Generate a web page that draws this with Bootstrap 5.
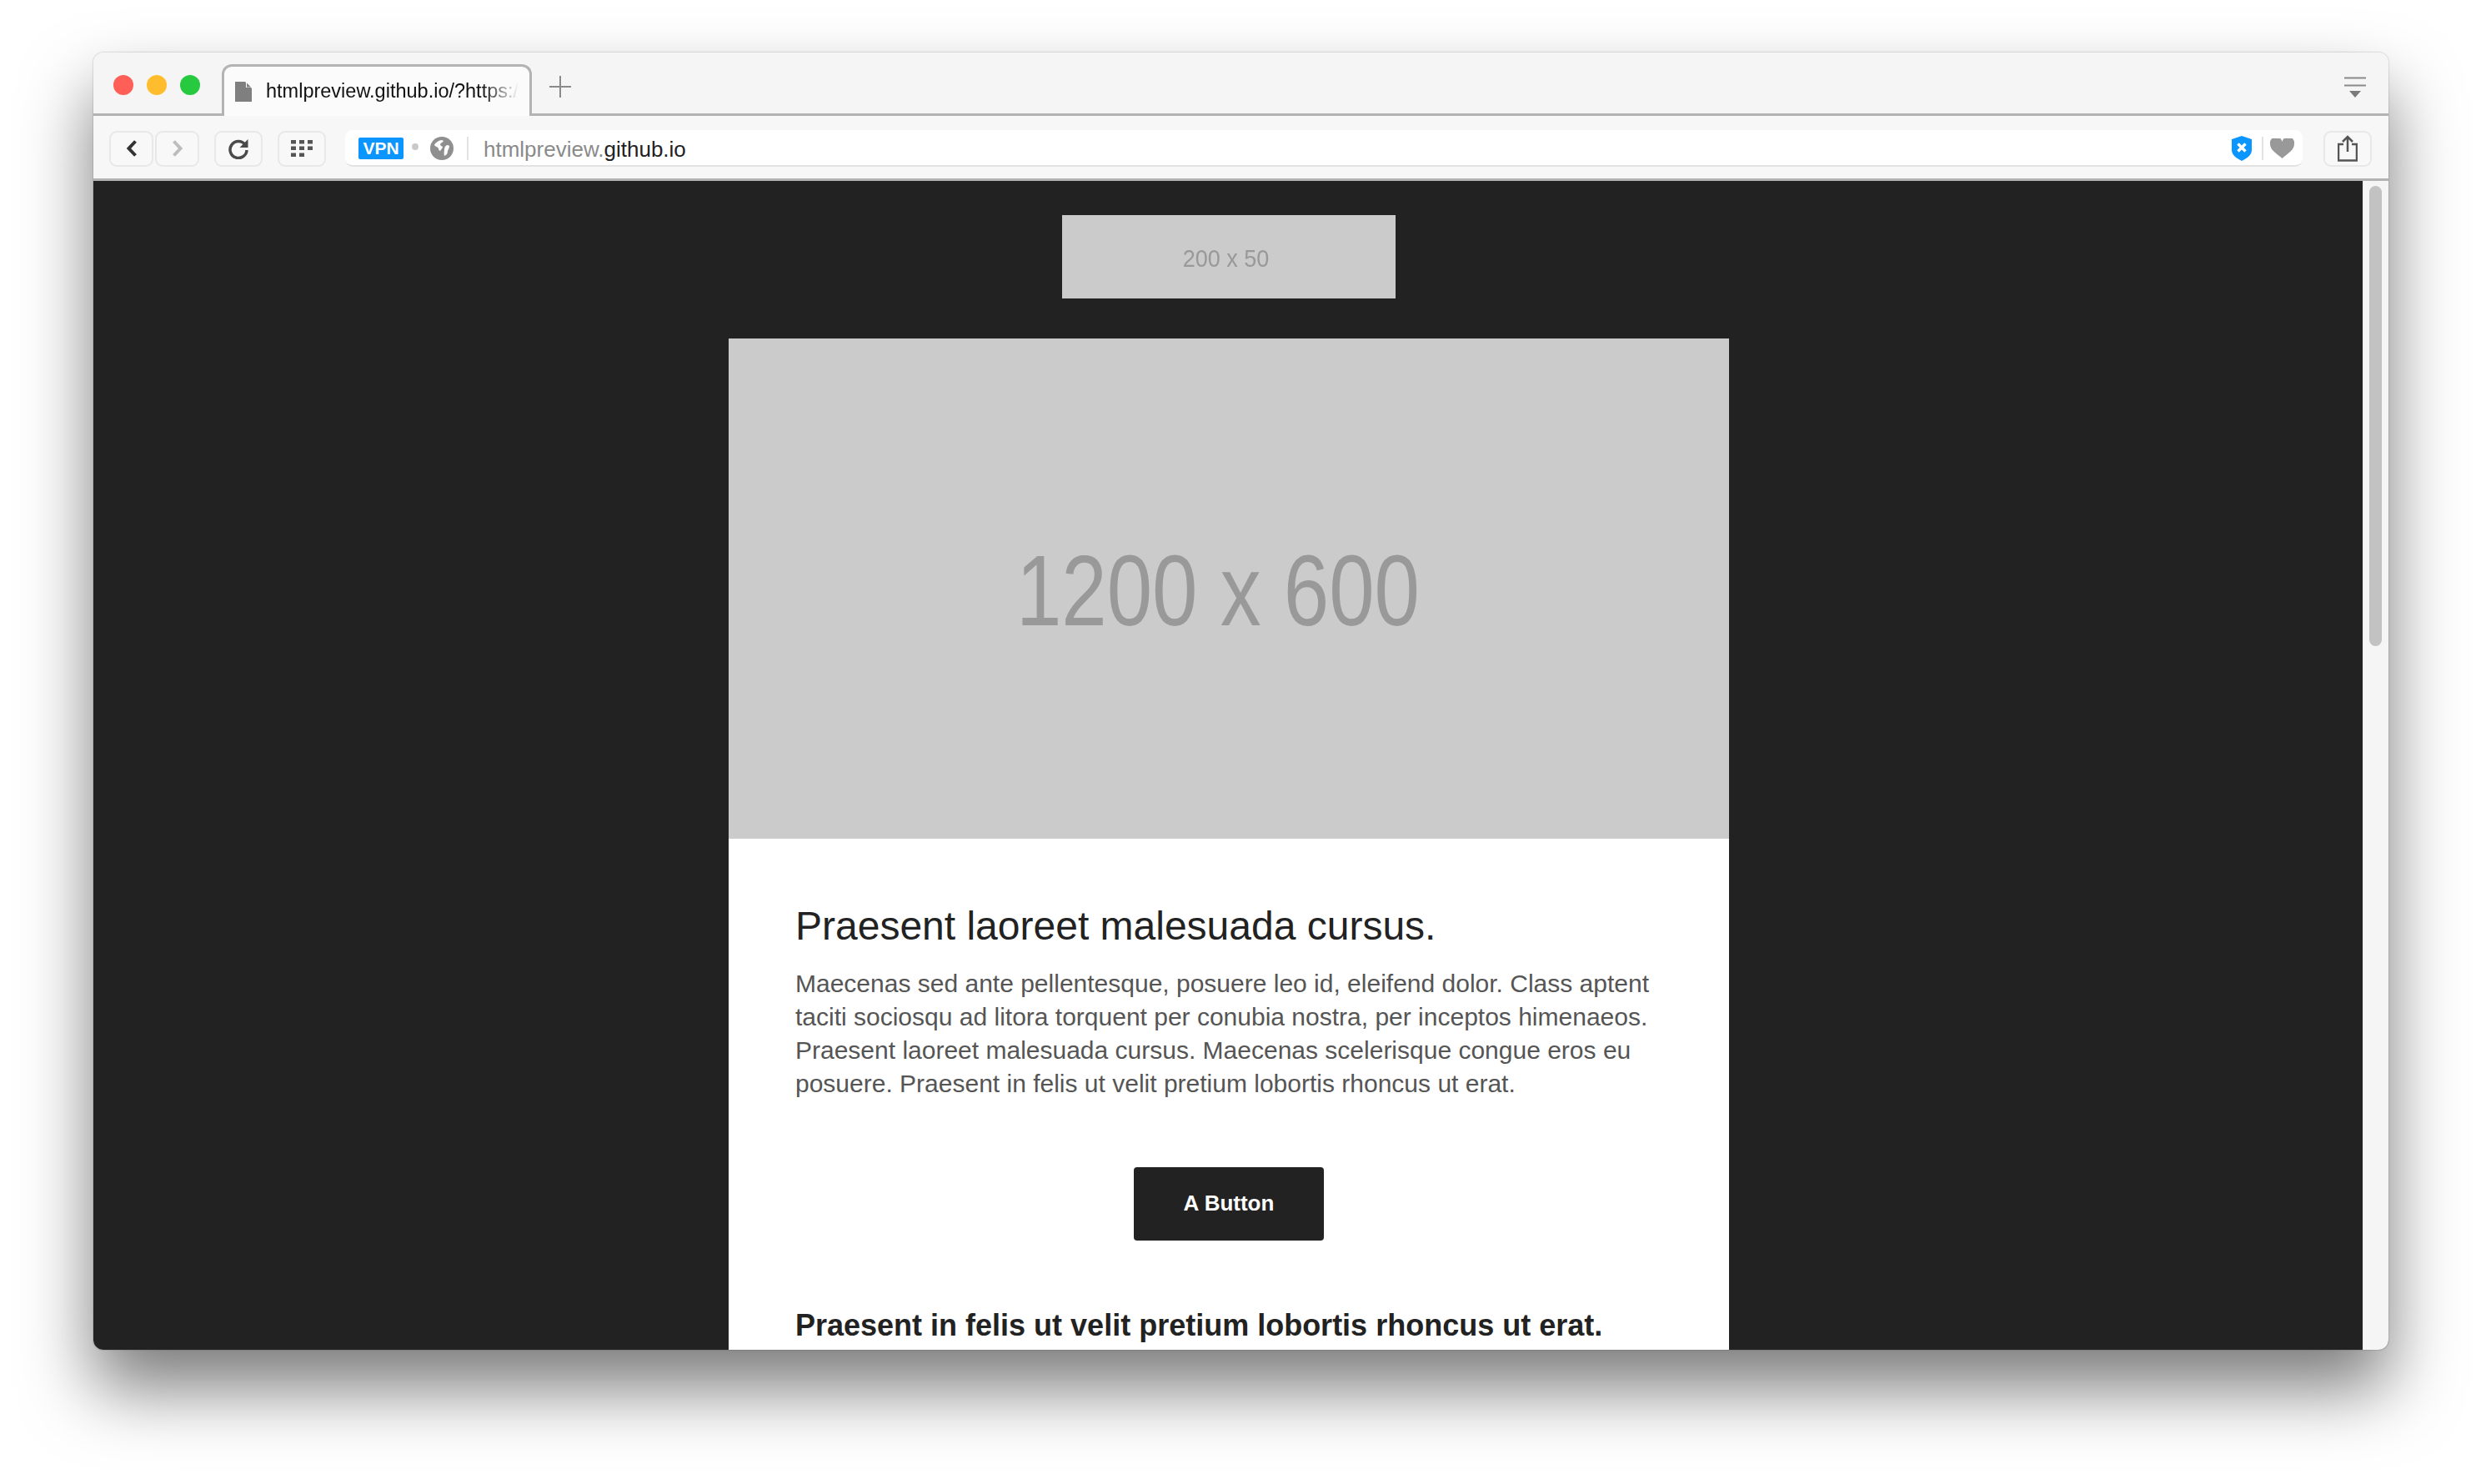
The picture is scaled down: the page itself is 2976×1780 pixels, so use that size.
<!DOCTYPE html>
<html lang="en">
<head>
<meta charset="utf-8">
<title>htmlpreview.github.io</title>
<link href="https://cdn.jsdelivr.net/npm/bootstrap@5.3.0/dist/css/bootstrap.min.css" rel="stylesheet">
<style>
html,body{height:100%;}
body{background:#fff;font-family:"Liberation Sans",Arial,sans-serif;padding:63px 111px 161px 112px;overflow:hidden;}
.win{height:1556px;border-radius:12px;overflow:hidden;box-shadow:0 46px 84px rgba(0,0,0,.52),0 0 2px rgba(0,0,0,.35);}
.titlebar{height:76px;background:#f5f5f5;border-bottom:3px solid #b3b3b3;padding-left:24px;padding-right:27px;}
.dot{width:24px;height:24px;border-radius:50%;margin-right:16px;margin-top:4px;flex:none;}
.dr{background:#ff5f57}.dy{background:#ffbd2e}.dg{background:#27c93f}
.tabitem{width:372px;height:62px;margin-left:10px;margin-bottom:-3px;background:#fbfbfb;border:3px solid #b3b3b3;border-bottom:0;border-radius:12px 12px 0 0;padding-left:13px;font-size:23.5px;color:#111;white-space:nowrap;overflow:hidden;align-self:flex-end;}
.tabtxt{margin-left:17px;width:316px;overflow:hidden;-webkit-mask-image:linear-gradient(90deg,#000 82%,transparent 96%);mask-image:linear-gradient(90deg,#000 82%,transparent 96%);}
.plus{margin-left:21px;margin-top:9px;}
.filtericon{margin-top:11px;}
.toolbar{height:78px;background:#f7f7f7;border-bottom:3px solid #b3b3b3;padding:3px 20px 0 19px;}
.tbtn{height:43px;background:#f8f8f8;border:2px solid #e8e8e8;border-radius:9px;flex:none;}
.w53{width:53px}.w58{width:58px}
.gap2px{margin-left:2px;}
.gap18px{margin-left:18px;}
.urlbar{height:44px;background:#fff;border-bottom:2px solid #e2e2e2;border-radius:9px;padding-top:2px;width:2348px;margin-left:23px;margin-right:25px;padding-left:16px;padding-right:10px;}
.vpn{width:54px;height:26px;background:#0a95ff;color:#fff;font-size:21px;font-weight:700;border-radius:2px;line-height:26px;text-align:center;}
.sdot{width:8px;height:8px;border-radius:50%;background:#c9c9c9;margin:-4px 10px 0;}
.vsep{width:2px;height:28px;background:#e2e2e2;}
.vsepr{margin:0 8px 0 12px;}
.urltxt{font-size:26px;color:#8a8a8a;margin-left:18px;margin-top:1px;line-height:1;}
.urltxt b{font-weight:400;color:#222;}
.stage{background:#222;min-height:0;}
.scrollrail{width:31px;background:#f5f5f5;border-left:1px solid #e8e8e8;padding:6px 8px 0 7px;}
.scrollthumb{height:552px;background:#c2c2c2;border-radius:8px;}
.canvas{overflow:hidden;padding-left:2px;}
.logobox{width:400px;height:100px;margin-top:41px;margin-bottom:48px;background:#cbcbcb;color:#999;font-size:30px;}
.logotxt{display:block;transform:scaleX(.9);margin-left:-7px;margin-top:3px;}
.herobox{width:1200px;height:600px;background:#cbcbcb;color:#999;font-size:120px;flex:none;}
.herotxt{display:block;transform:scaleX(.815);margin-left:-26px;margin-top:4px;white-space:nowrap;}
.mailbody{width:1200px;background:#fff;padding:75px 80px 0;}
.mailhead{font-size:48px;font-weight:400;color:#222;line-height:60px;margin:0 0 19px;}
.mailtext{font-size:30px;line-height:40px;color:#555;margin:0;}
.mailbtn{width:228px;height:88px;margin:80px auto 0;display:flex;align-items:center;justify-content:center;background:#222;color:#fff;font-size:26px;font-weight:700;border:0;border-radius:4px;padding:0 0 2px;}
.mailbtn:hover{background:#222;color:#fff;}
.mailsub{font-size:36px;font-weight:700;color:#222;line-height:46px;margin:79px 0 0;}
</style>
</head>
<body>
<div class="win d-flex flex-column">
  <div class="titlebar d-flex align-items-center flex-none">
    <span class="dot dr"></span><span class="dot dy"></span><span class="dot dg"></span>
    <div class="tabitem d-flex align-items-center">
      <svg width="20" height="24" viewBox="0 0 20 24"><path d="M0 0h12l8 8v16H0z" fill="#7f7f7f"/><path d="M13 0l7 7h-7z" fill="#fbfbfb"/><path d="M14 1.500l5 5h-5z" fill="#7f7f7f"/></svg>
      <span class="tabtxt">htmlpreview.github.io/?https://</span>
    </div>
    <svg class="plus" width="26" height="26" viewBox="0 0 26 26"><path d="M13 0v26M0 13h26" stroke="#8a8a8a" stroke-width="2"/></svg>
    <svg class="ms-auto filtericon" width="26" height="26" viewBox="0 0 26 26"><path d="M0 1.500h26M0 10.500h26" stroke="#8a8a8a" stroke-width="2"/><path d="M6 17h14l-7 8z" fill="#7a7a7a"/></svg>
  </div>
  <div class="toolbar d-flex align-items-center flex-none">
    <div class="tbtn w53 d-flex align-items-center justify-content-center"><svg width="14" height="22" viewBox="0 0 14 22"><path d="M11.500 2.500 3.500 11l8 8.500" fill="none" stroke="#333" stroke-width="4"/></svg></div>
    <div class="tbtn w53 d-flex align-items-center justify-content-center gap2px"><svg width="14" height="22" viewBox="0 0 14 22"><path d="M2.500 2.500l8 8.500-8 8.500" fill="none" stroke="#bdbdbd" stroke-width="4"/></svg></div>
    <div class="tbtn w58 d-flex align-items-center justify-content-center gap18px"><svg width="26" height="26" viewBox="0 0 26 26"><path d="M21 8.500A10 10 0 1 0 23 15" fill="none" stroke="#4a4a4a" stroke-width="3.500"/><path d="M24.500 2v10h-10z" fill="#4a4a4a"/></svg></div>
    <div class="tbtn w58 d-flex align-items-center justify-content-center gap18px"><svg width="26" height="20" viewBox="0 0 26 20"><path fill="#555" d="M0 0h6v4.500H0zM10 0h6v4.500h-6zM20 0h6v4.500h-6zM0 7.500h6V12H0zM10 7.500h6V12h-6zM20 7.500h6V12h-6zM0 15.500h6V20H0zM10 15.500h6V20h-6z"/></svg></div>
    <div class="urlbar d-flex align-items-center">
      <span class="vpn">VPN</span>
      <span class="sdot"></span>
      <svg width="28" height="28" viewBox="0 0 28 28" class="ms-1 me-3"><circle cx="14" cy="14" r="14" fill="#8f8f8f"/><path d="M14 4c-3 .5-7 2-9 6 1 2 4 2 5 4 0 2 1 3 2 3 1-2 3-3 3-5-1-1-3-1-3-3 1-2 3-2 4-4zM21 10c-2 0-4 2-4 5 0 3-1 5 0 8 3-1 4-3 4-6 1-2 2-4 2-6z" fill="#fff"/></svg>
      <span class="vsep"></span>
      <span class="urltxt">htmlpreview.<b>github.io</b></span>
      <svg class="ms-auto" width="24" height="30" viewBox="0 0 24 30"><path d="M12 0l12 4v13c0 6-6 10-12 13C6 27 0 23 0 17V4z" fill="#0a95ff"/><path d="M7.500 9.500l9 9m0-9l-9 9" stroke="#fff" stroke-width="3.500"/></svg>
      <span class="vsep vsepr"></span>
      <svg width="29" height="24" viewBox="0 0 29 24"><path d="M14.500 24C9 19 0 14 0 7a7 7 0 0 1 14.500-3A7 7 0 0 1 29 7c0 7-9 12-14.500 17z" fill="#999"/></svg>
    </div>
    <div class="tbtn w58 d-flex align-items-center justify-content-center"><svg width="24" height="32" viewBox="0 0 24 32"><path d="M7 11H1v19.500h22V11h-6M12 20V2M6 8l6-6 6 6" fill="none" stroke="#555" stroke-width="2.500"/></svg></div>
  </div>
  <div class="stage d-flex flex-grow-1">
    <div class="canvas flex-grow-1 d-flex flex-column align-items-center">
      <div class="logobox d-flex align-items-center justify-content-center flex-none"><span class="logotxt">200 x 50</span></div>
      <div class="herobox d-flex align-items-center justify-content-center"><span class="herotxt">1200 x 600</span></div>
      <div class="mailbody flex-grow-1">
        <h1 class="mailhead">Praesent laoreet malesuada cursus.</h1>
        <p class="mailtext">Maecenas sed ante pellentesque, posuere leo id, eleifend dolor. Class aptent<br>taciti sociosqu ad litora torquent per conubia nostra, per inceptos himenaeos.<br>Praesent laoreet malesuada cursus. Maecenas scelerisque congue eros eu<br>posuere. Praesent in felis ut velit pretium lobortis rhoncus ut erat.</p>
        <a href="#" class="btn mailbtn">A Button</a>
        <h3 class="mailsub">Praesent in felis ut velit pretium lobortis rhoncus ut erat.</h3>
      </div>
    </div>
    <div class="scrollrail flex-none"><div class="scrollthumb"></div></div>
  </div>
</div>
<script src="https://cdn.jsdelivr.net/npm/bootstrap@5.3.0/dist/js/bootstrap.bundle.min.js"></script>
</body>
</html>
